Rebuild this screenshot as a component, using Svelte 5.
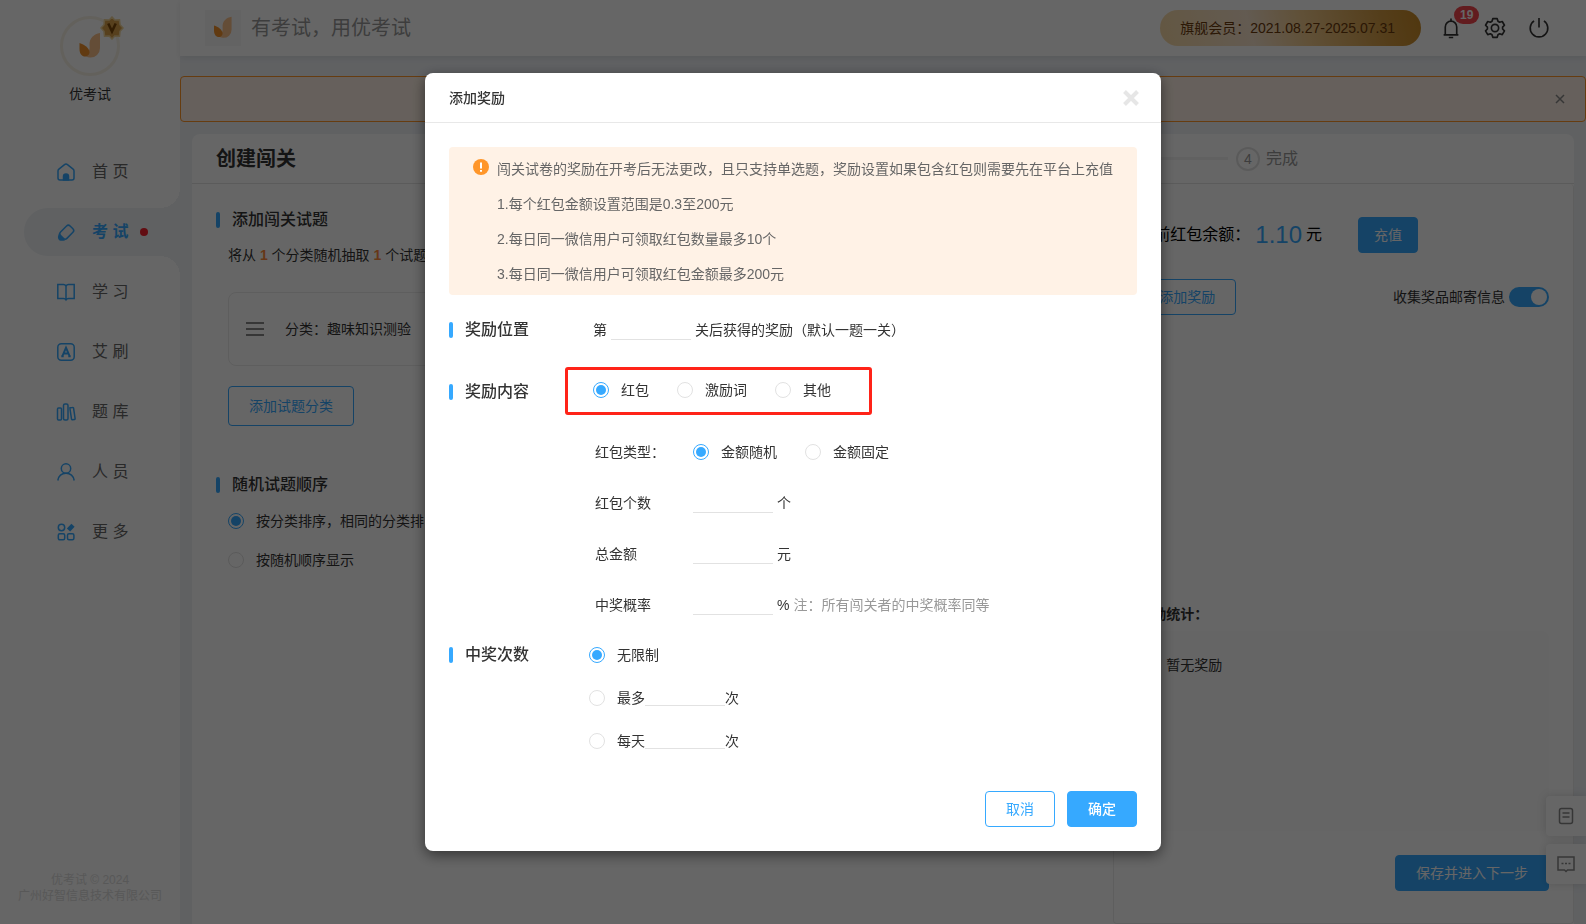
<script>
  const menu = [
    { id: 'home', label: '首 页' },
    { id: 'exam', label: '考 试', active: true },
    { id: 'study', label: '学 习' },
    { id: 'ai', label: '艾 刷' },
    { id: 'bank', label: '题 库' },
    { id: 'people', label: '人 员' },
    { id: 'more', label: '更 多' }
  ];
  const kinds = ['红包', '激励词', '其他'];
  const amounts = ['金额随机', '金额固定'];
  const fields = [
    { id: 'count', label: '红包个数', unit: '个' },
    { id: 'total', label: '总金额', unit: '元' },
    { id: 'rate', label: '中奖概率', unit: '%', note: '注：所有闯关者的中奖概率同等' }
  ];
  let kind = $state('红包');
  let amount = $state('金额随机');
  let limit = $state('none');
  let order = $state('category');
  let collect = $state(true);
</script>

{#snippet leaf(size)}
  <svg width={size} height={size} viewBox="0 0 28 28" aria-hidden="true">
    <path d="M24 1v15a9.500 9.500 0 0 1-10 9.500c-3 0-5-1.500-6-3.500 5-1 6-4 5.500-9C13.200 6 18 2 24 1z" fill="#f9c08a" />
    <path d="M3.500 11c5 1.500 9.500 5 10 9 .2 3-3 5-5.500 4.500C4.500 23.500 3.500 20 3.500 17z" fill="#f2922c" />
  </svg>
{/snippet}

{#snippet menuIcon(id)}
  <svg class="menu-icon" viewBox="0 0 20 20" aria-hidden="true">
    {#if id === 'home'}
      <path d="M5 18H4a2 2 0 0 1-2-2V9c0-.8.3-1.400.9-1.900l5.600-4.500a2.300 2.300 0 0 1 3 0l5.600 4.500c.6.5.9 1.100.9 1.900v7a2 2 0 0 1-2 2H5z" />
      <path d="M7.500 18v-3.500a2.500 2.500 0 0 1 5 0V18z" fill="currentColor" />
    {:else if id === 'exam'}
      <rect x="6.200" y="3.400" width="9" height="13.500" rx="2.500" transform="rotate(45 10.700 10.200)" />
      <path d="M3 11.500c-1.800 3.200-1.300 6.700 1.500 7.200 1.500.2 3.300.1 4.700-.4z" fill="currentColor" stroke="none" />
    {:else if id === 'study'}
      <path d="M10 4.200C9.500 3 8.500 2.500 7.500 2.500H1.800v14H7.500c1.200 0 2 .4 2.500 1.300.5-.9 1.300-1.300 2.500-1.300h5.700v-14h-5.700c-1 0-2 .5-2.500 1.700zM10 4v13.500" />
    {:else if id === 'ai'}
      <rect x="1.800" y="1.800" width="16.400" height="16.400" rx="3.500" />
      <path d="M6.300 14.300L10 5.700l3.700 8.600M7.800 11.500h4.400M5.300 14.300h2.400M12.300 14.300h2.400" stroke-width="2" />
    {:else if id === 'bank'}
      <rect x="1.500" y="6" width="4" height="12" rx="1" />
      <rect x="7.500" y="2" width="4.500" height="16" rx="1.500" />
      <path d="M14 5.800l2.400-.4a1 1 0 0 1 1.200.9l1.500 10.200a1 1 0 0 1-.9 1.100l-1.500.2a1 1 0 0 1-1.200-.9L14 7z" />
    {:else if id === 'people'}
      <circle cx="10" cy="6.500" r="4.700" />
      <path d="M1.800 18.500c.8-4.500 4-7.200 8.200-7.200s7.400 2.700 8.200 7.200" />
    {:else}
      <circle cx="5.500" cy="5.500" r="3.200" />
      <rect x="2.300" y="11.800" width="6.400" height="6" rx="1.500" />
      <rect x="11.500" y="11.800" width="6.400" height="6" rx="1.500" />
      <path d="M12.500 8l4.500-4.800" stroke-width="4.500" />
    {/if}
  </svg>
{/snippet}

<div class="page">
  <aside class="sidebar">
    <div class="profile">
      <div class="avatar">
        {@render leaf(28)}
        <svg class="medal" viewBox="0 0 24 24" aria-hidden="true">
          <path d="M12 1l2.800 3 4.700-.2L20 8.700l3 3.300-3 3.300-.5 4.900-4.700-.2L12 23l-2.800-3-4.700.2-.5-4.900L1 12l3-3.300.5-4.900 4.700.2z" fill="#d9a04a" stroke="#f0d49a" />
          <path d="M8.300 7.500L12 15.500l3.700-8" fill="none" stroke="#7d4a08" stroke-width="2.600" />
        </svg>
      </div>
      <span>优考试</span>
    </div>
    <nav>
      {#each menu as item}
        <a href="#{item.id}" class:active={item.active}>
          {@render menuIcon(item.id)}
          <span>{item.label}</span>
          {#if item.active}<i class="dot"></i>{/if}
        </a>
      {/each}
    </nav>
    <footer>优考试 © 2024<br />广州好智信息技术有限公司</footer>
  </aside>

  <div class="content">
    <header class="topbar">
      <div class="brand">
        <span class="logo">{@render leaf(28)}</span>
        <span>有考试，用优考试</span>
      </div>
      <div class="tools">
        <div class="vip">旗舰会员：2021.08.27-2025.07.31</div>
        <button class="tool bell" aria-label="通知">
          <svg viewBox="0 0 20 20"><path d="M3.300 16.200h13.400M4.800 16V9a5.200 5.200 0 0 1 10.400 0v7M10 3.200V1.400M8 18.600h4" /></svg>
          <span class="badge">19</span>
        </button>
        <button class="tool" aria-label="设置">
          <svg viewBox="0 0 20 20"><path d="M8 1.500h4l.7 2.400 1.500.9 2.400-.7 2 3.400-1.700 1.700v1.700l1.700 1.700-2 3.400-2.400-.7-1.500.9-.7 2.300H8l-.7-2.300-1.500-.9-2.400.7-2-3.400 1.700-1.700V9.200L1.400 7.500l2-3.400 2.400.7 1.500-.9z" stroke-linejoin="round" /><circle cx="10" cy="10" r="3.300" /></svg>
        </button>
        <button class="tool" aria-label="退出">
          <svg viewBox="0 0 20 20"><path d="M10 1v8.500M5.500 3.500a8 8 0 1 0 9 0" /></svg>
        </button>
      </div>
    </header>

    <div class="alert">
      <button aria-label="关闭提示"><svg viewBox="0 0 10 10"><path d="M1 1l8 8M9 1l-8 8" /></svg></button>
    </div>

    <main class="card">
      <div class="card-head">
        <h1>创建闯关</h1>
        <div class="step"><i class="line"></i><b>4</b><span>完成</span></div>
      </div>
      <div class="columns">
        <section class="left">
          <h2 class="title">添加闯关试题</h2>
          <p class="summary">将从 <b>1</b> 个分类随机抽取 <b>1</b> 个试题</p>
          <div class="category">
            <svg width="18" height="16" viewBox="0 0 18 16" aria-hidden="true"><path d="M0 2h18M0 8h18M0 14h18" /></svg>
            <span>分类：趣味知识测验</span>
          </div>
          <button class="btn outline tall">添加试题分类</button>
          <h2 class="title second">随机试题顺序</h2>
          <label class="order"><input type="radio" value="category" bind:group={order} />按分类排序，相同的分类排</label>
          <label class="order"><input type="radio" value="random" bind:group={order} />按随机顺序显示</label>
        </section>
        <section class="right">
          <div class="balance">
            <span>当前红包余额：</span><strong>1.10</strong><span>元</span>
            <button class="btn solid">充值</button>
          </div>
          <div class="rewards">
            <button class="btn outline">添加奖励</button>
            <label class="collect">收集奖品邮寄信息<input class="switch" type="checkbox" role="switch" bind:checked={collect} /></label>
          </div>
          <h3>奖励统计：</h3>
          <div class="stats">暂无奖励</div>
          <div class="save"><button class="btn solid">保存并进入下一步</button></div>
        </section>
      </div>
    </main>
  </div>

  <div class="floats">
    <button aria-label="文档"><svg viewBox="0 0 20 20"><rect x="3.500" y="2.500" width="13" height="15" rx="2" /><path d="M6.500 7h7M6.500 11h7" /></svg></button>
    <button aria-label="留言"><svg viewBox="0 0 20 20"><path d="M2 3h16v13h-6.500L10 17.500 8.500 16H2z" /><path d="M5.500 9.500h2M9 9.500h2M12.500 9.500h2" /></svg></button>
  </div>
</div>

<div class="backdrop">
  <div class="modal" role="dialog" aria-modal="true" aria-labelledby="dialog-title">
    <div class="modal-head">
      <h2 id="dialog-title">添加奖励</h2>
      <button aria-label="关闭"><svg viewBox="0 0 18 18"><path d="M2.500 2.500l13 13M15.500 2.500l-13 13" /></svg></button>
    </div>
    <div class="modal-body">
      <div class="notice">
        <svg viewBox="0 0 16 16" aria-hidden="true"><circle cx="8" cy="8" r="8" fill="#ff9629" /><path d="M8 3.500v6M8 11v1.800" stroke="#fff" stroke-width="2" /></svg>
        <div>
          <p>闯关试卷的奖励在开考后无法更改，且只支持单选题，奖励设置如果包含红包则需要先在平台上充值</p>
          <p>1.每个红包金额设置范围是0.3至200元</p>
          <p>2.每日同一微信用户可领取红包数量最多10个</p>
          <p>3.每日同一微信用户可领取红包金额最多200元</p>
        </div>
      </div>

      <div class="row position">
        <h3 class="title">奖励位置</h3>
        <label class="inline">第<input type="text" />关后获得的奖励（默认一题一关）</label>
      </div>

      <div class="row kind">
        <h3 class="title">奖励内容</h3>
        <div class="radios">
          {#each kinds as k}
            <label><input type="radio" value={k} bind:group={kind} />{k}</label>
          {/each}
          <i class="mark"></i>
        </div>
      </div>

      <div class="fields">
        <div class="field">
          <span class="name">红包类型：</span>
          <div class="radios">
            {#each amounts as a}
              <label><input type="radio" value={a} bind:group={amount} />{a}</label>
            {/each}
          </div>
        </div>
        {#each fields as f}
          <div class="field">
            <label class="name" for={f.id}>{f.label}</label>
            <input id={f.id} type="text" />
            <span>{f.unit}</span>
            {#if f.note}<span class="note">{f.note}</span>{/if}
          </div>
        {/each}
      </div>

      <div class="row times">
        <h3 class="title">中奖次数</h3>
        <div class="limits">
          <div><input type="radio" id="l0" value="none" bind:group={limit} /><label for="l0">无限制</label></div>
          <div><input type="radio" id="l1" value="max" bind:group={limit} /><label for="l1">最多</label><input type="text" aria-label="最多次数" />次</div>
          <div><input type="radio" id="l2" value="daily" bind:group={limit} /><label for="l2">每天</label><input type="text" aria-label="每天次数" />次</div>
        </div>
      </div>
    </div>
    <div class="modal-foot">
      <button class="btn outline">取消</button>
      <button class="btn solid strong">确定</button>
    </div>
  </div>
</div>

<style>
  :global(body) { margin: 0; }
  :global(*), :global(*::before), :global(*::after) { box-sizing: border-box; }
  .page, .backdrop {
    font-family: "Liberation Sans", "Noto Sans CJK SC", sans-serif;
    font-size: 14px;
    line-height: 20px;
    color: #333;
  }
  h1, h2, h3, p { margin: 0; }
  button, input { font: inherit; color: inherit; }
  button { border: 0; background: none; padding: 0; cursor: pointer; }
  svg { display: block; fill: none; stroke: currentColor; stroke-width: 1.500; }

  .page { display: flex; min-height: 100vh; overflow: hidden; background: #eff2f6; position: relative; }

  .sidebar { width: 180px; flex: none; display: flex; flex-direction: column; background: #fff; }
  .profile { display: flex; flex-direction: column; align-items: center; gap: 8px; padding-top: 16px; height: 141px; }
  .avatar { position: relative; width: 60px; height: 60px; border: 3px solid #f8f2e6; border-radius: 50%; display: grid; place-items: center; }
  .avatar :global(svg), .logo :global(svg) { stroke: none; }
  .avatar .medal { position: absolute; right: -7px; top: -3px; width: 24px; height: 24px; }
  nav { padding-top: 7px; }
  nav a { display: flex; align-items: center; gap: 16px; height: 48px; margin: 0 0 12px 24px; padding-left: 32px; color: #666; text-decoration: none; font-size: 16px; border-radius: 24px 0 0 24px; position: relative; }
  nav a.active { background: #eff2f6; color: #36a9ff; font-weight: 700; }
  nav a.active::before, nav a.active::after { content: ""; position: absolute; right: 0; width: 20px; height: 20px; }
  nav a.active::before { bottom: 100%; background: radial-gradient(circle at 0 0, #fff 20px, #eff2f6 20px); }
  nav a.active::after { top: 100%; background: radial-gradient(circle at 0 100%, #fff 20px, #eff2f6 20px); }
  .menu-icon { width: 20px; height: 20px; color: #36a9ff; }
  .dot { width: 8px; height: 8px; border-radius: 50%; background: #f5222d; margin-left: -4px; }
  footer { margin-top: auto; padding-bottom: 20px; text-align: center; font-size: 12px; line-height: 16px; color: #dcdcdc; }

  .content { flex: 1; min-width: 0; display: flex; flex-direction: column; }
  .topbar { height: 56px; flex: none; display: flex; justify-content: space-between; align-items: center; padding: 0 36px 0 25px; background: #fff; box-shadow: 0 2px 6px rgba(0, 0, 0, .08); }
  .brand { display: flex; align-items: center; gap: 10px; font-size: 20px; color: #999; }
  .logo { width: 36px; height: 36px; display: grid; place-items: center; background: #f8f8f8; }
  .logo :global(svg) { width: 24px; height: 24px; }
  .tools { display: flex; align-items: center; gap: 22px; color: #333; }
  .vip { height: 36px; line-height: 36px; margin-right: -3px; padding: 0 26px 0 20px; border-radius: 18px; color: #6b3a0c; background: linear-gradient(75deg, #f8d9a5, #f7e3cc 35%, #f0c98c 55%, #d29a42 85%, #c98a25); }
  .tool { position: relative; width: 22px; height: 22px; }
  .tool svg { width: 22px; height: 22px; }
  .badge { position: absolute; left: 14px; top: -11px; height: 18px; padding: 0 6px; border-radius: 9px; background: #f5484f; color: #fff; font-size: 12px; line-height: 18px; font-weight: 700; }

  .alert { margin-top: 20px; height: 46px; flex: none; display: flex; align-items: center; justify-content: flex-end; padding-right: 20px; border: 1px solid #ff9629; border-radius: 4px; background: #fff1e5; }
  .alert button { color: #888; }
  .alert svg { width: 10px; height: 10px; }

  .card { flex: 1; margin: 12px 12px 0; display: flex; flex-direction: column; background: #fff; border-radius: 8px 8px 0 0; }
  .card-head { height: 50px; flex: none; display: flex; align-items: center; justify-content: space-between; padding: 0 276px 0 24px; border-bottom: 1px solid #e4e4e4; }
  h1 { font-size: 20px; line-height: 28px; font-weight: 700; color: #333; }
  .step { display: flex; align-items: center; color: #999; font-size: 16px; }
  .step .line { width: 200px; height: 3px; margin-right: 8px; background: #f2f2f2; }
  .step b { width: 24px; height: 24px; margin-right: 6px; border: 2px solid #e2e2e2; border-radius: 50%; font-size: 14px; line-height: 20px; font-weight: 400; text-align: center; }
  .columns { flex: 1; display: grid; grid-template-columns: 2fr 1fr; }
  .left { padding: 24px 24px 0; }
  .title { display: flex; align-items: center; gap: 12px; font-size: 16px; line-height: 24px; font-weight: 500; }
  .title::before { content: ""; width: 4px; height: 16px; border-radius: 2px; background: #36a9ff; }
  .summary { margin: 13px 12px 27px; }
  .summary b { color: #ff8a3c; }
  .category { display: flex; align-items: center; gap: 21px; margin: 0 12px 20px; height: 74px; padding: 0 17px; border: 1px solid #ececec; border-radius: 8px; }
  .category svg { color: #888; stroke-width: 2; }
  .btn { height: 36px; padding: 0 20px; border: 1px solid #36a9ff; border-radius: 4px; line-height: 20px; }
  .outline { color: #36a9ff; background: #fff; }
  .solid { color: #fff; background: #36a9ff; }
  .strong { font-weight: 500; }
  .left .btn { margin-left: 12px; }
  .tall { height: 40px; }
  .second { margin-top: 47px; }
  .order { display: flex; align-items: center; gap: 12px; margin: 14px 12px 19px; }
  .order + .order { margin-top: 0; }

  .right { display: flex; flex-direction: column; padding: 33px 24px 32px; border: 1px solid #ececec; border-top: 0; border-radius: 0 4px 4px 4px; }
  .balance { display: flex; align-items: center; font-size: 16px; color: #000; }
  .balance strong { margin: 0 4px 0 5px; font-size: 24px; font-weight: 400; line-height: 28px; color: #36a9ff; }
  .balance .btn { margin-left: 36px; padding: 0 15px; font-size: 14px; }
  .rewards { display: flex; align-items: center; justify-content: space-between; margin-top: 26px; }
  .collect { display: flex; align-items: center; gap: 4px; }
  .switch { appearance: none; width: 40px; height: 20px; margin: 0; border-radius: 10px; background: #ccc; display: flex; padding: 2px; }
  .switch::before { content: ""; width: 16px; height: 16px; border-radius: 50%; background: #fff; }
  .switch:checked { background: #36a9ff; justify-content: flex-end; }
  .right h3 { margin-top: auto; font-size: 14px; font-weight: 700; }
  .stats { height: 200px; margin: 7px 0 24px; padding: 24px 28px; border-radius: 8px; background: #fcfcfc; }
  .save { display: flex; justify-content: flex-end; }

  .floats { position: absolute; right: 0; bottom: 40px; display: grid; gap: 8px; }
  .floats button { width: 40px; height: 40px; display: grid; place-items: center; background: #fff; border-radius: 4px 0 0 4px; box-shadow: 0 0 10px rgba(0, 0, 0, .15); color: #888; }
  .floats svg { width: 20px; height: 20px; }

  .backdrop { position: fixed; inset: 0; display: grid; place-items: center; background: rgba(0, 0, 0, .6); }
  .modal { width: 736px; max-width: 100%; background: #fff; border-radius: 8px; box-shadow: 0 4px 14px rgba(0, 0, 0, .5); }
  .modal-head { display: flex; align-items: center; justify-content: space-between; height: 50px; padding: 0 21px 0 24px; border-bottom: 1px solid #e8e8e8; }
  .modal-head h2 { font-size: 14px; font-weight: 500; }
  .modal-head svg { width: 18px; height: 18px; stroke: #e6e6e6; stroke-width: 4; }
  .modal-body { padding: 24px; }
  .notice { display: flex; gap: 8px; padding: 5px 24px 3px; border-radius: 4px; background: #fff2e6; color: #666; line-height: 35px; }
  .notice svg { width: 16px; height: 16px; margin-top: 7px; flex: none; stroke: none; }
  .row { display: flex; }
  .row .title { width: 144px; flex: none; }
  input[type="text"] { width: 80px; height: 20px; padding: 0; border: 0; border-bottom: 1px solid #e2e2e2; background: none; outline: 0; }
  .position { margin-top: 23px; }
  .inline { display: flex; align-items: center; gap: 4px; height: 24px; }
  .radios { position: relative; display: flex; align-items: center; gap: 28px; }
  .radios label { display: flex; align-items: center; gap: 12px; }
  .kind { margin-top: 38px; }
  .kind .radios { height: 20px; }
  .mark { position: absolute; inset: -13px -41px -15px -28px; border: 3px solid #ff2318; border-radius: 3px; pointer-events: none; }
  input[type="radio"] { appearance: none; width: 16px; height: 16px; flex: none; margin: 0; border: 1px solid #e2e2e2; border-radius: 50%; display: grid; place-items: center; }
  input[type="radio"]:checked { border-color: #36a9ff; }
  input[type="radio"]:checked::before { content: ""; width: 10px; height: 10px; border-radius: 50%; background: #36a9ff; }
  .fields { display: grid; gap: 27px; margin: 36px 0 0 146px; }
  .field { display: flex; align-items: center; gap: 4px; height: 24px; }
  .name { width: 94px; }
  .note { color: #999; }
  .times { margin-top: 26px; }
  .times .title { width: 140px; align-self: flex-start; }
  .limits { display: grid; gap: 19px; }
  .limits div { display: flex; align-items: center; height: 24px; }
  .limits input[type="radio"] { margin-right: 12px; }
  .limits input[type="text"] { height: 16px; }
  .modal-foot { display: flex; justify-content: flex-end; gap: 12px; padding: 14px 24px 24px; }
</style>
